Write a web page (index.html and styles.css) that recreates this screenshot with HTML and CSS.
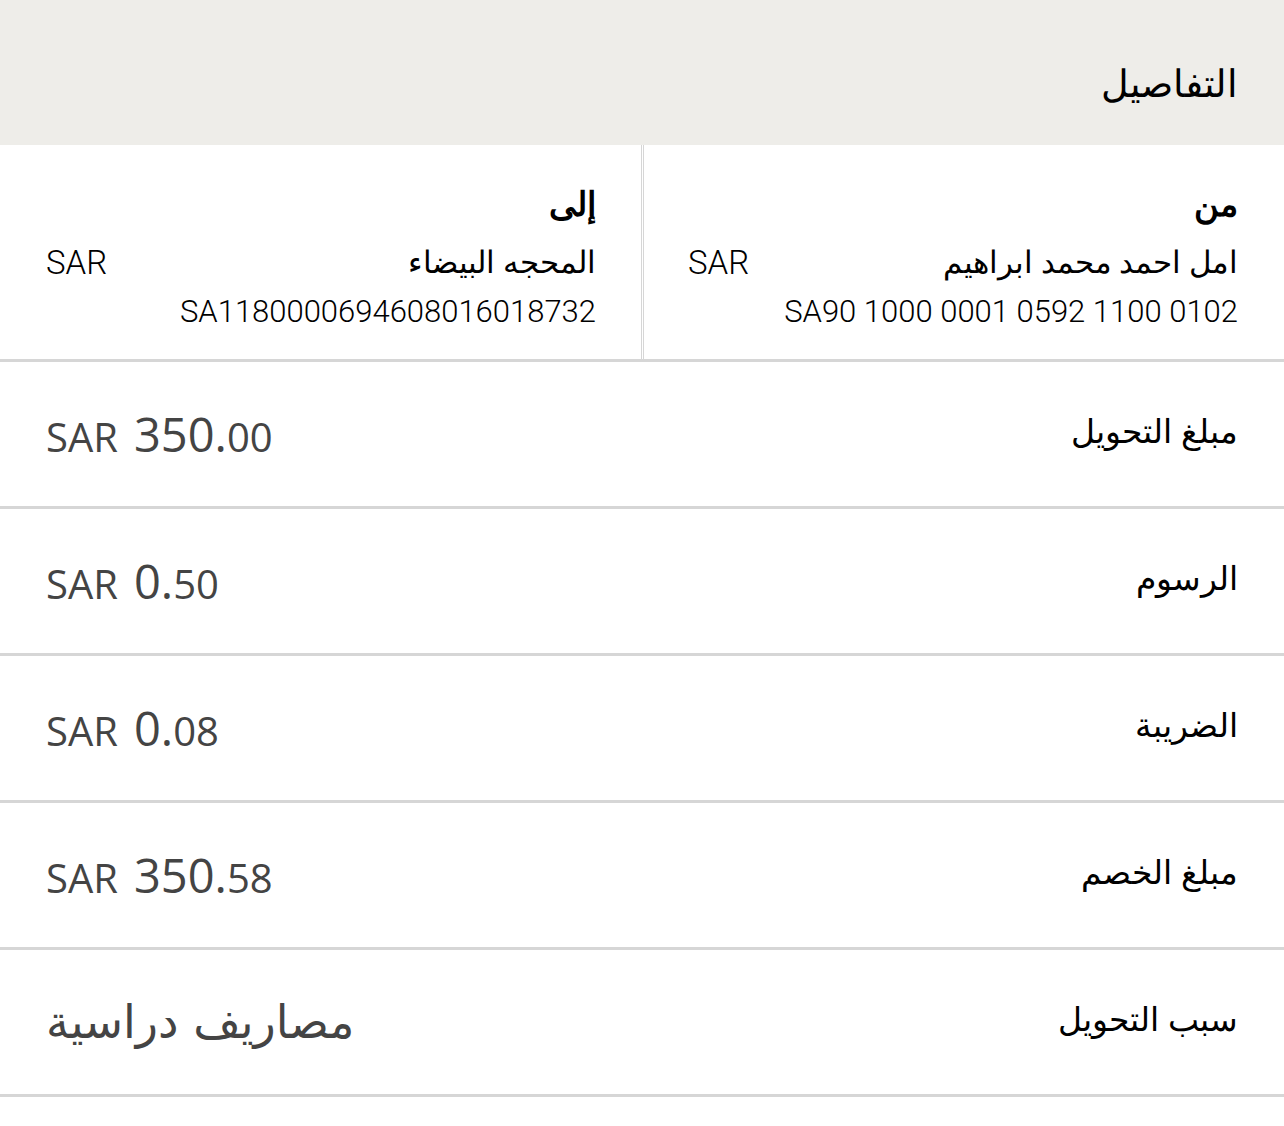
FILE: index.html
```html
<!DOCTYPE html>
<html lang="ar" dir="rtl">
<head>
<meta charset="utf-8">
<title>التفاصيل</title>
<link rel="stylesheet" href="styles.css">
</head>
<body>
<div class="page">
  <header class="head"><h1 class="head-title">التفاصيل</h1></header>
  <section class="parties">
    <div class="party party-from">
      <div class="party-title">من</div>
      <div class="party-line"><span class="party-name">امل احمد محمد ابراهيم</span><span class="party-cur">SAR</span></div>
      <div class="party-iban" dir="ltr">SA90 1000 0001 0592 1100 0102</div>
    </div>
    <div class="party party-to">
      <div class="party-title">إلى</div>
      <div class="party-line"><span class="party-name">المحجه البيضاء</span><span class="party-cur">SAR</span></div>
      <div class="party-iban" dir="ltr">SA1180000694608016018732</div>
    </div>
  </section>
  <div class="row"><div class="row-label">مبلغ التحويل</div><div class="row-value" dir="ltr"><span class="cur">SAR</span><span class="big">350.</span><span class="dec">00</span></div></div>
  <div class="row"><div class="row-label">الرسوم</div><div class="row-value" dir="ltr"><span class="cur">SAR</span><span class="big">0.</span><span class="dec">50</span></div></div>
  <div class="row"><div class="row-label">الضريبة</div><div class="row-value" dir="ltr"><span class="cur">SAR</span><span class="big">0.</span><span class="dec">08</span></div></div>
  <div class="row"><div class="row-label">مبلغ الخصم</div><div class="row-value" dir="ltr"><span class="cur">SAR</span><span class="big">350.</span><span class="dec">58</span></div></div>
  <div class="row"><div class="row-label">سبب التحويل</div><div class="row-value reason">مصاريف دراسية</div></div>
</div>
</body>
</html>
```
FILE: styles.css
```css
html, body { margin: 0; padding: 0; background: #fff; }
body { font-family: "DejaVu Sans", sans-serif; color: #000; }
.page { width: 1284px; }
.head { background: #eeede9; height: 145px; display: flex; align-items: center; padding: 22px 46px 0; box-sizing: border-box; }
.head-title { margin: 0; font-family: "Liberation Serif", serif; font-weight: normal; font-size: 38px; }
.parties { display: flex; border-bottom: 3px solid #d6d6d6; }
.party { flex: 1; padding: 38px 46px 0 44px; box-sizing: border-box; height: 214px; }
.party-to { padding-left: 46px; padding-right: 45px; }
.party-from { border-left: 3px double #d6d6d6; }
.party-title { font-family: "Liberation Serif", serif; font-weight: bold; font-size: 34px; line-height: 44px; }
.party-line { display: flex; justify-content: space-between; align-items: center; margin-top: 13px; height: 44px; }
.party-name { font-family: "Liberation Serif", serif; font-size: 31px; }
.party-cur { font-family: "Roboto", sans-serif; font-size: 33px; font-weight: 300; }
.party-iban { font-family: "Roboto", sans-serif; font-size: 31px; font-weight: 300; text-align: right; height: 44px; line-height: 44px; margin-top: 6px; }
.row { display: flex; justify-content: space-between; align-items: center; height: 147px; box-sizing: border-box; border-bottom: 3px solid #d6d6d6; padding: 0 46px; }
.row-label { font-family: "Liberation Sans", sans-serif; font-size: 33px; color: #000; padding-bottom: 6px; }
.row-value { font-family: "Open Sans", sans-serif; color: #444; display: flex; align-items: baseline; }
.row-value .cur { font-size: 40px; margin-right: 16px; }
.row-value .big { font-size: 47px; }
.row-value .dec { font-size: 40px; }
.reason { font-family: "DejaVu Sans", sans-serif; font-size: 46px; padding-bottom: 0; }
```
